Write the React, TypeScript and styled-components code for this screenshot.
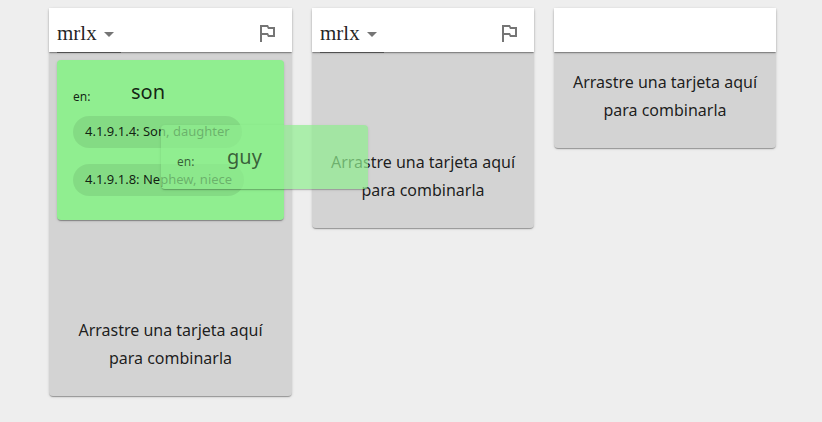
import React from "react";
import styled, { createGlobalStyle } from "styled-components";

const GlobalStyle = createGlobalStyle`
  * { box-sizing: border-box; }
  body {
    margin: 0;
    background: #eeeeee;
    color: rgba(0, 0, 0, 0.87);
    font-family: "Noto Sans", "Open Sans", sans-serif;
    font-size: 16px;
  }
`;

const elevation = `
  box-shadow: 0 2px 1px -1px rgba(0, 0, 0, 0.2),
    0 1px 1px 0 rgba(0, 0, 0, 0.14),
    0 1px 3px 0 rgba(0, 0, 0, 0.12);
`;

const Board = styled.main`
  position: relative;
  display: grid;
  grid-template-columns: 243fr 222fr 222fr;
  align-items: start;
  gap: 20px;
  padding: 8px 46px 24px 49px;
`;

const Column = styled.section`
  background: #d3d3d3;
  border-radius: 4px;
  ${elevation}
`;

const Header = styled.header`
  display: flex;
  justify-content: space-between;
  height: 44px;
  padding: 0 8px;
  background: #ffffff;
  ${elevation}
`;

const SelectField = styled.label`
  display: grid;
  width: 64px;
  box-shadow: 0 1px 0 #505050;

  > * { grid-area: 1 / 1; }
`;

const Select = styled.select`
  appearance: none;
  width: 100%;
  padding: 5px 24px 0 0;
  border: 0;
  border-radius: 0;
  background: transparent;
  color: rgba(0, 0, 0, 0.87);
  font-family: "Liberation Serif", serif;
  font-size: 21px;
  outline: none;
`;

const Arrow = styled.svg`
  width: 24px;
  height: 24px;
  margin-top: 14px;
  justify-self: end;
  fill: #757575;
  pointer-events: none;
`;

const IconButton = styled.button`
  align-self: end;
  display: flex;
  padding: 5px;
  margin-bottom: 2px;
  border: 0;
  background: transparent;
  color: #757575;

  svg {
    width: 24px;
    height: 24px;
    fill: currentColor;
  }
`;

const Card = styled.article`
  margin: 8px 8px 0;
  padding: 16px 16px 24px;
  border-radius: 4px;
  background: #90ee90;
  ${elevation}
`;

const DraggedCard = styled(Card)`
  position: absolute;
  left: 161px;
  top: 125px;
  width: 207px;
  height: 64px;
  margin: 0;
  padding: 16px;
  opacity: 0.7;
`;

const Gloss = styled.div<{ $labelWidth: number }>`
  display: grid;
  grid-template-columns: ${({ $labelWidth }) => $labelWidth}px 1fr;
  align-items: end;
  height: 32px;
`;

const Language = styled.span`
  font-size: 12px;
  line-height: 22px;
`;

const Word = styled.span`
  font-size: 20px;
  line-height: 32px;
`;

const Domains = styled.ul`
  display: grid;
  justify-items: start;
  gap: 16px;
  margin: 8px 0 0;
  padding: 0;
  list-style: none;
`;

const Chip = styled.li`
  height: 32px;
  padding: 0 12px;
  border-radius: 16px;
  background: rgba(0, 0, 0, 0.08);
  font-size: 13px;
  line-height: 30px;
  white-space: nowrap;
`;

const DropSlot = styled.div`
  height: 80px;
`;

const Hint = styled.p`
  margin: 0;
  padding: 16px 16px 24px;
  line-height: 28px;
  text-align: center;
`;

function WordHeader() {
  return (
    <Header>
      <SelectField>
        <Select aria-label="Vernáculo" defaultValue="mrlx">
          <option value="mrlx">mrlx</option>
        </Select>
        <Arrow viewBox="0 0 24 24" aria-hidden="true">
          <path d="M7 10l5 5 5-5z" />
        </Arrow>
      </SelectField>
      <IconButton type="button" aria-label="Marcar">
        <svg viewBox="0 0 24 24" aria-hidden="true">
          <path d="M14 6l-1-2H5v17h2v-7h5l1 2h7V6h-6zm4 8h-4l-1-2H7V6h5l1 2h5v6z" />
        </svg>
      </IconButton>
    </Header>
  );
}

function DropHint() {
  return (
    <Hint>
      Arrastre una tarjeta aquí
      <br />
      para combinarla
    </Hint>
  );
}

const domains = ["4.1.9.1.4: Son, daughter", "4.1.9.1.8: Nephew, niece"];

export default function App() {
  return (
    <>
      <GlobalStyle />
      <Board>
        <Column>
          <WordHeader />
          <Card>
            <Gloss $labelWidth={58}>
              <Language>en:</Language>
              <Word>son</Word>
            </Gloss>
            <Domains>
              {domains.map((domain) => (
                <Chip key={domain}>{domain}</Chip>
              ))}
            </Domains>
          </Card>
          <DropSlot />
          <DropHint />
        </Column>
        <Column>
          <WordHeader />
          <DropSlot />
          <DropHint />
        </Column>
        <Column>
          <Header />
          <DropHint />
        </Column>
        <DraggedCard>
          <Gloss $labelWidth={50}>
            <Language>en:</Language>
            <Word>guy</Word>
          </Gloss>
        </DraggedCard>
      </Board>
    </>
  );
}
